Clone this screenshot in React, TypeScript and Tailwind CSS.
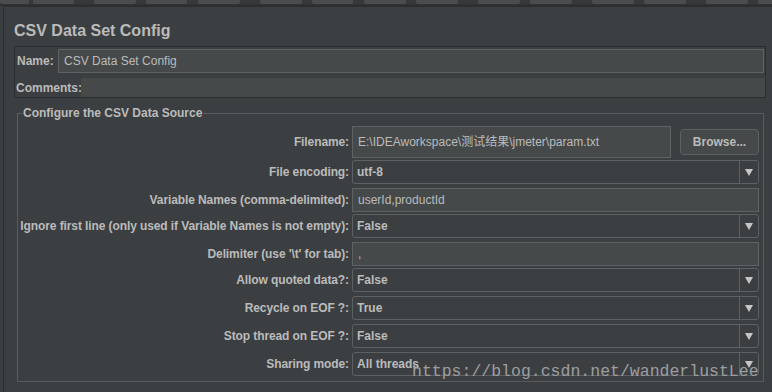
import React from "react";

const tabs = [
  "ml-[0px] w-[29px]",
  "ml-[4px] w-[41px]",
  "ml-[20px] w-[42px]",
  "ml-[10px] w-[41px]",
  "ml-[11px] w-[42px]",
  "ml-[20px] w-[42px]",
  "ml-[10px] w-[41px]",
  "ml-[11px] w-[42px]",
  "ml-[10px] w-[42px]",
  "ml-[20px] w-[42px]",
  "ml-[10px] w-[42px]",
  "ml-[20px] w-[42px]",
  "ml-[10px] w-[42px]",
  "ml-[20px] w-[42px]",
  "ml-[10px] w-[42px]",
];

const Arrow = () => (
  <svg width="8" height="7" viewBox="0 0 8 7">
    <polygon points="0,0 8,0 4,7" fill="#c6c6c6" />
  </svg>
);

const Combo = ({value}: {value: string}) => (
  <div className="flex h-[24px] w-[407px] rounded-[3px] border border-[#5e6163] bg-[#3c3f41]">
    <div className="flex flex-1 items-center pl-[4px] text-[12px] font-bold text-[#bbbbbb]">{value}</div>
    <div className="flex w-[19px] items-center justify-center border-l border-[#5e6163]">
      <Arrow />
    </div>
  </div>
);

const Field = ({value}: {value: string}) => (
  <div className="flex h-[24px] w-[407px] items-center border border-[#5f6264] bg-[#45494a] pl-[5px] text-[12px] text-[#bbbbbb]">
    {value}
  </div>
);

const Row = ({label, mt, children}: {label: string; mt: string; children: React.ReactNode}) => (
  <div className={"flex items-center " + mt}>
    <div className="flex w-[334px] shrink-0 justify-end pr-[3px]">
      <span className="whitespace-nowrap text-[12px] font-bold tracking-[-0.1px] text-[#bbbbbb]">{label}</span>
    </div>
    {children}
  </div>
);

const App = () => {
  return (
    <div className="relative h-[392px] w-[772px] overflow-hidden bg-[#3c3f41] font-['Liberation_Sans','Noto_Sans_CJK_SC',sans-serif] text-[#bbbbbb]">
      {/* toolbar edge */}
      <div className="flex h-[4px] bg-[#36393b]">
        {tabs.map((t, i) => (
          <div key={i} className={"h-[4px] shrink-0 rounded-b-[2px] bg-[#4a4d4f] " + t} />
        ))}
      </div>
      <div className="h-[2px] bg-[#2e3032]" />

      <div className="ml-[3px] h-full border-l border-t border-[#2b2d2f] pt-[15px]">
        <h2 className="pl-[10px] text-[16px] font-bold leading-[18px] text-[#bbbbbb]">CSV Data Set Config</h2>

        <div className="ml-[10px] mr-[6px] mt-[6px] border border-[#2b2d2f] pt-[2px]">
          <div className="flex h-[24px] items-center">
            <div className="w-[43px] pl-[2px] text-[12px] font-bold">Name:</div>
            <div className="mr-[1px] flex h-full flex-1 items-center border border-[#5f6264] bg-[#45494a] pl-[5px] text-[12px]">
              CSV Data Set Config
            </div>
          </div>
          <div className="mt-[5px] flex h-[19px] items-center">
            <div className="w-[66px] pl-[1px] text-[12px] font-bold">Comments:</div>
            <div className="h-full flex-1 bg-[#45494a]" />
          </div>
        </div>

        <fieldset className="ml-[13px] mr-[8px] mt-[8px] border border-[#595c5e] pb-[5px] pt-[6px]">
          <legend className="ml-[4px] px-[1px] text-[12px] font-bold leading-[14px] text-[#bbbbbb]">
            Configure the CSV Data Source
          </legend>

          <Row label="Filename:" mt="mt-0">
            <div className="flex h-[32px] w-[407px] items-center">
              <div className="flex h-full w-[319px] items-center border border-[#5f6264] bg-[#45494a] pl-[5px] text-[12px]">
                E:\IDEAworkspace\测试结果\jmeter\param.txt
              </div>
              <button className="ml-[9px] h-[26px] w-[79px] rounded-[4px] border border-[#5e6163] bg-[#45494a] text-[12px] font-bold text-[#bbbbbb]">
                Browse...
              </button>
            </div>
          </Row>
          <Row label="File encoding:" mt="mt-[2px]">
            <Combo value="utf-8" />
          </Row>
          <Row label="Variable Names (comma-delimited):" mt="mt-[4px]">
            <Field value="userId,productId" />
          </Row>
          <Row label="Ignore first line (only used if Variable Names is not empty):" mt="mt-[2px]">
            <Combo value="False" />
          </Row>
          <Row label="Delimiter (use '\t' for tab):" mt="mt-[4px]">
            <Field value="," />
          </Row>
          <Row label="Allow quoted data?:" mt="mt-[2px]">
            <Combo value="False" />
          </Row>
          <Row label="Recycle on EOF ?:" mt="mt-[4px]">
            <Combo value="True" />
          </Row>
          <Row label="Stop thread on EOF ?:" mt="mt-[4px]">
            <Combo value="False" />
          </Row>
          <Row label="Sharing mode:" mt="mt-[4px]">
            <Combo value="All threads" />
          </Row>
        </fieldset>
      </div>

      {/* watermark */}
      <div className="absolute left-[412px] top-[364px] font-['Liberation_Mono',monospace] text-[16.5px] leading-none text-[#9c9ea0]">
        https://blog.csdn.net/wanderlustLee
      </div>
    </div>
  );
};

export default App;
